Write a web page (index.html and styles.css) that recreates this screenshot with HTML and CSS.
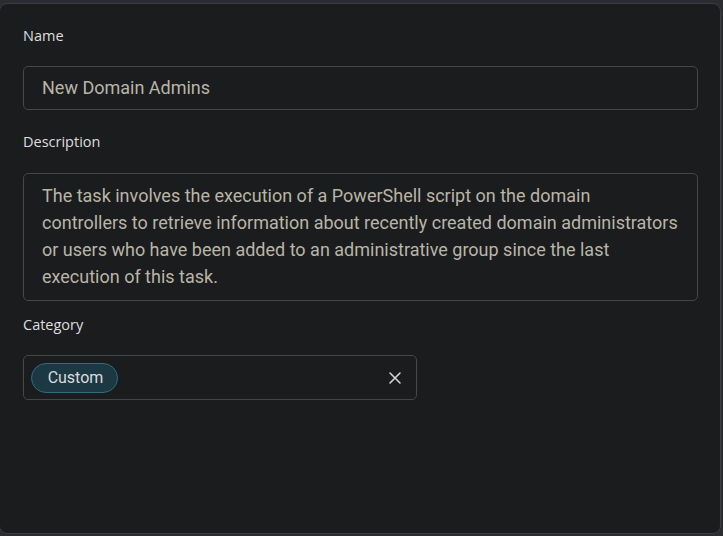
FILE: index.html
```html
<!DOCTYPE html>
<html>
<head>
<meta charset="utf-8">
<link rel="stylesheet" href="styles.css">
</head>
<body>
<div class="card">
  <div class="label label-first">Name</div>
  <div class="field field-input">New Domain Admins</div>
  <div class="label label-desc">Description</div>
  <div class="field field-area">The task involves the execution of a PowerShell script on the domain controllers to retrieve information about recently created domain administrators or users who have been added to an administrative group since the last execution of this task.</div>
  <div class="label label-cat">Category</div>
  <div class="select">
    <span class="chip">Custom</span>
    <svg class="clear" width="14" height="14" viewBox="0 0 14 14"><path d="M2 2 L12 12 M12 2 L2 12" stroke="#d4d4d4" stroke-width="1.6" stroke-linecap="round"/></svg>
  </div>
</div>
</body>
</html>
```
FILE: styles.css
```css
html, body {
  margin: 0;
  padding: 0;
  background: #2b2c2f;
  height: 100%;
}
body {
  overflow: hidden;
}
.card {
  box-sizing: border-box;
  margin: 3px 0 0 -1px;
  width: 722px;
  height: 531px;
  border: 1px solid #3c3d40;
  border-radius: 8px;
  background: #1b1c1e;
  padding: 22px 22px 0 23px;
  display: flex;
  flex-direction: column;
  align-items: flex-start;
}
.label {
  font-family: "Open Sans", sans-serif;
  font-size: 14.5px;
  line-height: 20px;
  color: #dedede;
}
.label-first { margin-bottom: 20px; }
.label-desc { margin-top: 22px; margin-bottom: 21px; }
.label-cat { margin-top: 14px; margin-bottom: 20px; }
.field {
  box-sizing: border-box;
  align-self: stretch;
  border: 1px solid #45464a;
  border-radius: 5px;
  font-family: Roboto, sans-serif;
  font-size: 18px;
  color: #b9b5a7;
  padding-left: 18px;
  padding-right: 18px;
}
.field-input {
  height: 44px;
  line-height: 42px;
}
.field-area {
  height: 128px;
  line-height: 27px;
  padding-top: 8px;
  padding-right: 19px;
}
.select {
  box-sizing: border-box;
  width: 394px;
  height: 45px;
  border: 1px solid #45464a;
  border-radius: 5px;
  display: flex;
  align-items: center;
  justify-content: space-between;
  padding: 0 14px 0 7px;
}
.chip {
  box-sizing: border-box;
  height: 30px;
  width: 87px;
  border: 1px solid #2d6d7f;
  border-radius: 15px;
  background: #1c3843;
  color: #dcdcdc;
  font-family: Roboto, sans-serif;
  font-size: 16px;
  line-height: 28px;
  text-align: center;
  padding-left: 2px;
}
.clear {
  display: block;
}
```
